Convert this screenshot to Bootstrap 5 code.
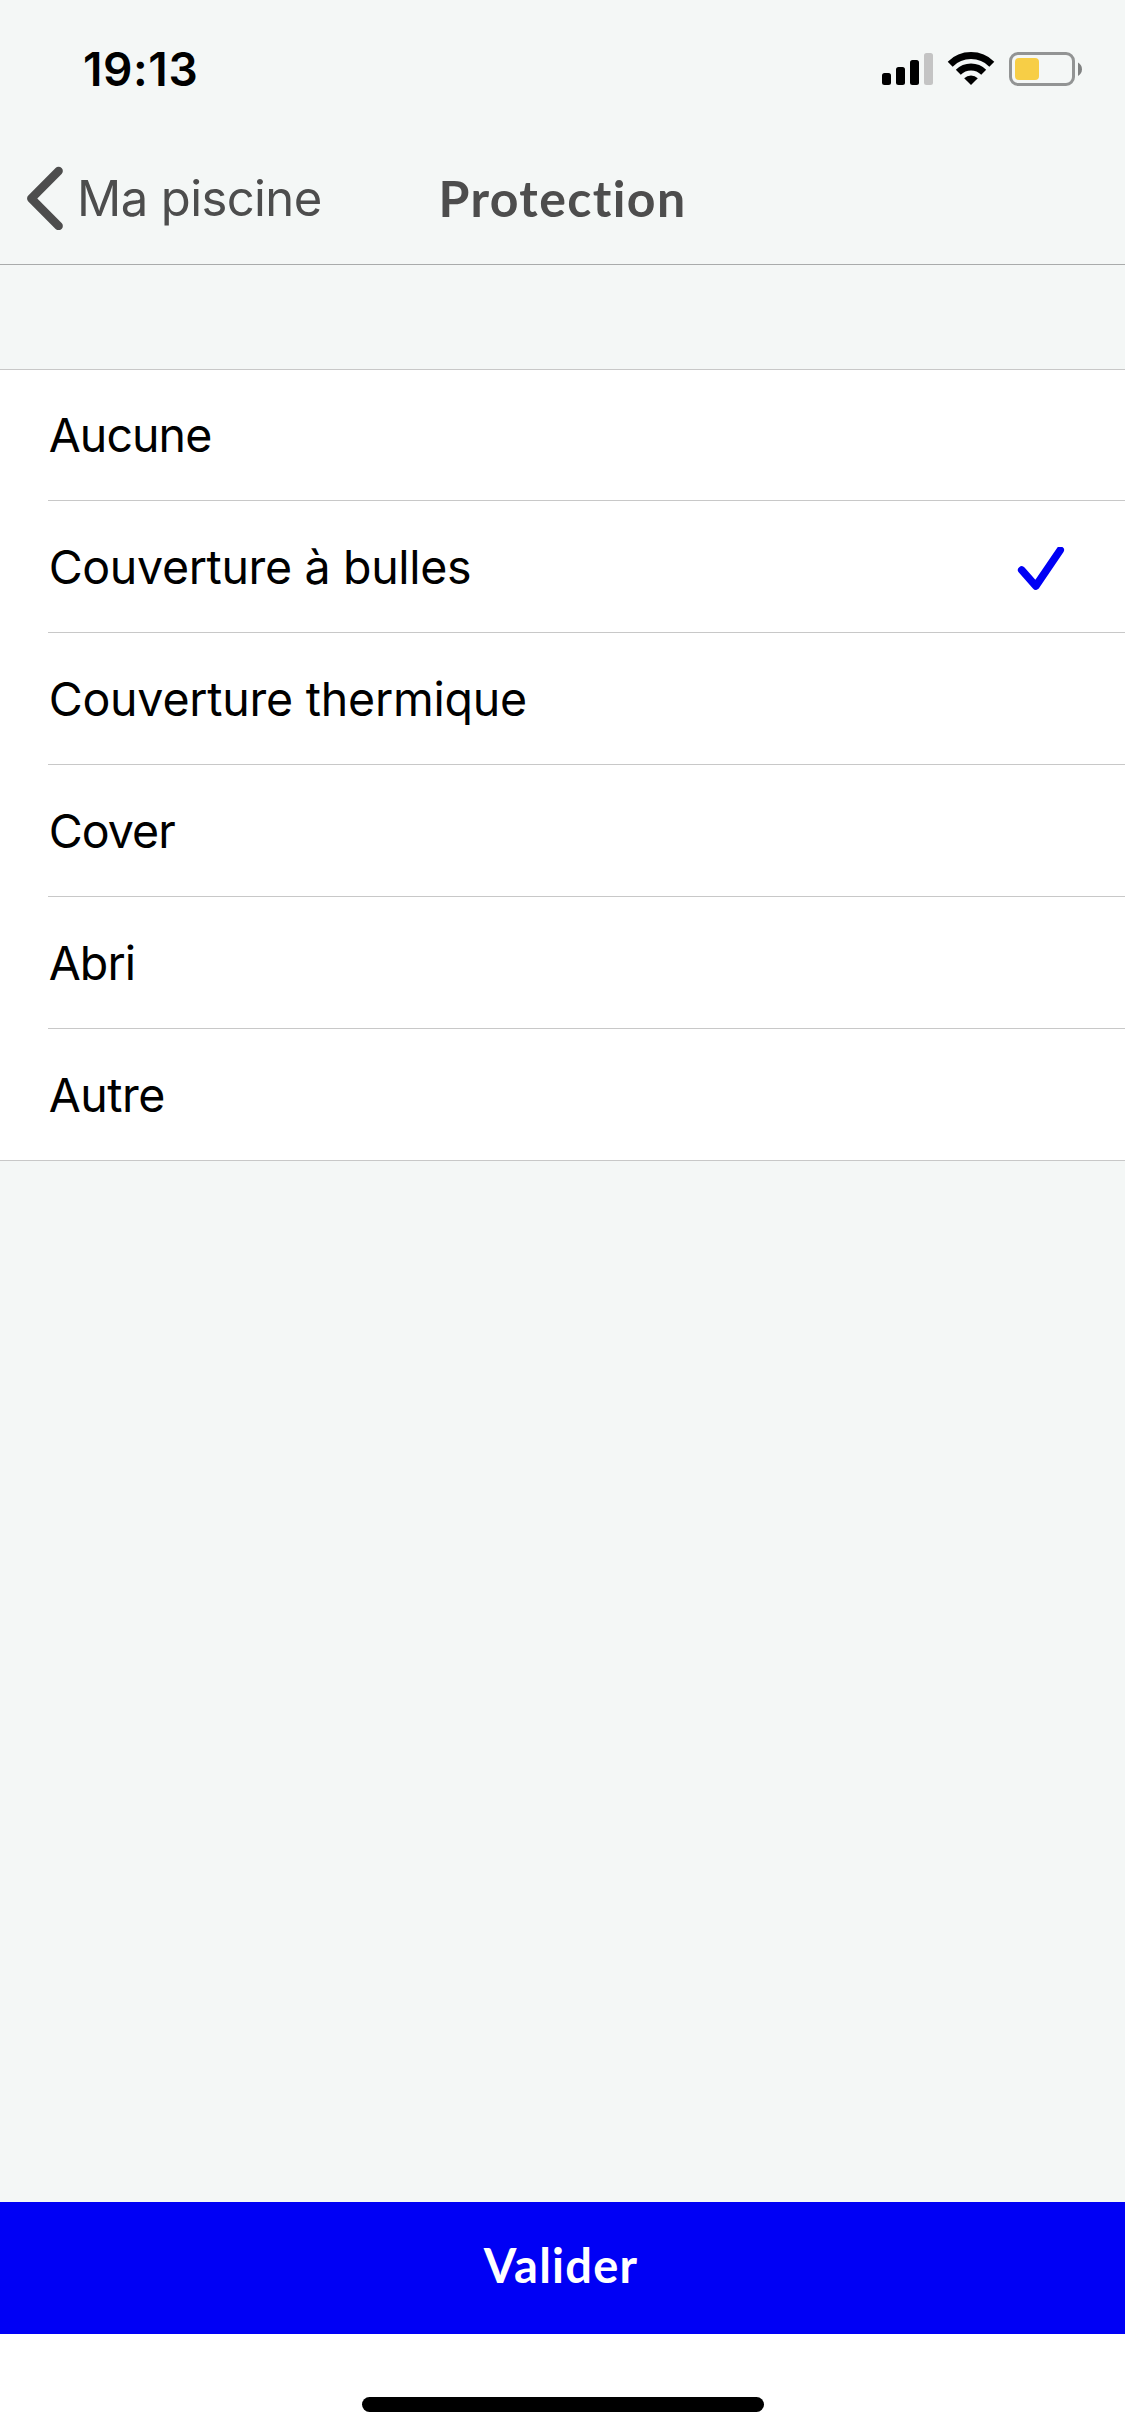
<!DOCTYPE html>
<html lang="fr">
<head>
<meta charset="utf-8">
<meta name="viewport" content="width=device-width, initial-scale=1">
<title>Protection</title>
<link href="https://cdn.jsdelivr.net/npm/bootstrap@5.3.0/dist/css/bootstrap.min.css" rel="stylesheet">
<style>
  body { font-family: Inter, "Liberation Sans", sans-serif; background: #f4f7f6; color: #000; }
  .screen { height: 2436px; overflow: hidden; }
  .status-bar { height: 132px; padding: 40px 43px 0 83px; }
  .clock { font-size: 46px; line-height: 56px; font-weight: 600; letter-spacing: .6px; padding-top: 1px; }
  .status-icons { margin-top: 10px; }
  .title-bar { height: 133px; border-bottom: 1px solid #a9abab; color: #4d4d4d; }
  .back-link { padding: 34px 0 0 26px; color: #4d4d4d; }
  .back-label { font-size: 49px; line-height: 59px; font-weight: 400; letter-spacing: -.6px; margin: 3px 0 0 8px; }
  .screen-title { font: 700 50px/60px Lato, sans-serif; letter-spacing: 1.39px; padding-top: 36px; margin: 0; }
  .options { margin-top: 104px; border-top: 1px solid #c8c8c8; border-bottom: 1px solid #c8c8c8; padding-left: 48px; background: #fff; }
  .options .option { height: 132px; padding: 38px 60px 0 .7px; border: 0; border-bottom: 1px solid #c8c8c8; background: #fff; color: #000; font-size: 46.5px; line-height: 56px; }
  .options .option:first-child { height: 131px; padding-top: 37px; }
  .options .option:last-child { height: 131px; border-bottom: 0; }
  .tight { letter-spacing: -.93px; }
  .snug { letter-spacing: -.5px; }
  .wide-label { letter-spacing: -.34px; }
  .wider-label { letter-spacing: -.22px; }
  .tick { margin-top: 8px; }
  .btn-validate, .btn-validate:hover { height: 132px; background: #0000f5; color: #fff; border: 0; border-radius: 0; padding: 0 3px 6px 0; font: 700 47px/56px Lato, sans-serif; letter-spacing: 1.23px; }
  .home-area { height: 102px; padding-top: 63px; padding-left: 1px; }
  .home-bar { width: 402px; height: 15px; }
</style>
</head>
<body>
<div class="screen d-flex flex-column">
  <header>
    <div class="status-bar d-flex justify-content-between align-items-start">
      <span class="clock">19:13</span>
      <svg class="status-icons" width="200" height="38" viewBox="882 50 200 38" aria-hidden="true">
        <rect x="882" y="73" width="9" height="12" rx="2.5"/>
        <rect x="896" y="67" width="9" height="18" rx="2.5"/>
        <rect x="910" y="60" width="9" height="25" rx="2.5"/>
        <rect x="924" y="53" width="9" height="32" rx="2.5" fill="#c4c4c4"/>
        <g fill="none" stroke="#000" stroke-width="7">
          <path d="M950.2 64.2a29.5 29.5 0 0 1 41.6 0"/>
          <path d="M958.3 72.3a18 18 0 0 1 25.4 0"/>
        </g>
        <path d="M964.2 78.2a9.8 9.8 0 0 1 13.6 0L971 85z"/>
        <rect x="1010.5" y="53.5" width="63" height="31" rx="7.5" fill="none" stroke="#929494" stroke-width="3"/>
        <rect x="1015" y="58" width="24" height="22" rx="4" fill="#f7ce46"/>
        <path d="M1078 62.5c2.4 1.2 4 3.7 4 6.7s-1.6 5.500-4 6.700z" fill="#808282"/>
      </svg>
    </div>
    <nav class="title-bar d-flex align-items-start">
      <a href="#" class="back-link d-flex align-items-start flex-fill text-decoration-none w-25">
        <svg width="43" height="64" viewBox="26 166 43 64" fill="none" stroke="#4d4d4d" stroke-width="8.500" stroke-linecap="round" stroke-linejoin="round" aria-hidden="true"><path d="M58.600 171L31.300 198.500L58.600 226"/></svg>
        <span class="back-label text-nowrap">Ma piscine</span>
      </a>
      <h1 class="screen-title text-center flex-fill w-25">Protection</h1>
      <div class="flex-fill w-25"></div>
    </nav>
  </header>
  <main class="flex-grow-1">
    <ul class="options list-group list-group-flush rounded-0">
      <li class="option list-group-item tight">Aucune</li>
      <li class="option list-group-item wide-label d-flex justify-content-between align-items-start">Couverture à bulles
        <svg class="tick" width="50" height="48" viewBox="1015 547 50 48" fill="none" stroke="#0000f5" stroke-width="7.600" stroke-linecap="round" stroke-linejoin="round" aria-label="Sélectionné"><path d="M1021.700 569.800L1035.800 585.800L1060.200 549.900" transform="translate(0 .2)"/></svg>
      </li>
      <li class="option list-group-item wider-label">Couverture thermique</li>
      <li class="option list-group-item tight">Cover</li>
      <li class="option list-group-item tight">Abri</li>
      <li class="option list-group-item snug">Autre</li>
    </ul>
  </main>
  <footer>
    <button type="button" class="btn btn-validate d-block w-100">Valider</button>
    <div class="home-area bg-white d-flex justify-content-center"><div class="home-bar bg-black rounded-pill"></div></div>
  </footer>
</div>
<script src="https://cdn.jsdelivr.net/npm/bootstrap@5.3.0/dist/js/bootstrap.bundle.min.js"></script>
</body>
</html>
